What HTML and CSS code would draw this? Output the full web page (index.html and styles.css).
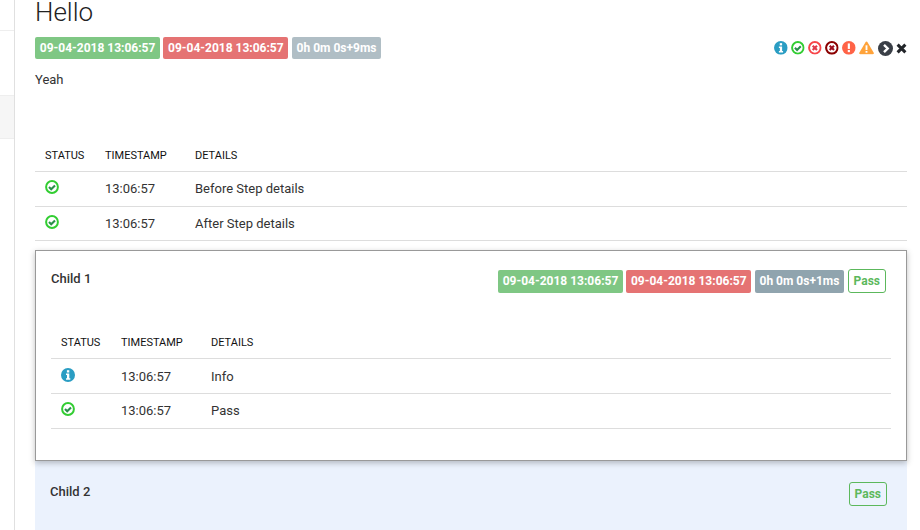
FILE: index.html
```html
<!DOCTYPE html>
<html lang="en">
<head>
<meta charset="utf-8">
<title>Hello</title>
<link rel="stylesheet" href="styles.css">
</head>
<body>
<svg class="defs" width="0" height="0" aria-hidden="true">
  <symbol id="i-info" viewBox="0 0 14 14"><circle cx="7" cy="7" r="7" fill="#2a9dc3"/><rect x="5.9" y="2.2" width="2.4" height="2.3" fill="#fff"/><path d="M5 5.6h3.3v4.6h1v1.5H5v-1.5h1V7.1H5z" fill="#fff"/></symbol>
  <symbol id="i-pass" viewBox="0 0 14 14"><circle cx="7" cy="7" r="5.9" fill="#fff" stroke="#32cd32" stroke-width="2"/><path d="M4 7l2.2 2.2L10 5.4" fill="none" stroke="#2a8f4a" stroke-width="2.1"/></symbol>
  <symbol id="i-fail" viewBox="0 0 14 14"><circle cx="7" cy="7" r="5.9" fill="#fff" stroke="#f7464a" stroke-width="2"/><path d="M4.8 4.8l4.4 4.4M9.2 4.8l-4.4 4.4" stroke="#e03a4a" stroke-width="2.2"/></symbol>
  <symbol id="i-fatal" viewBox="0 0 14 14"><circle cx="7" cy="7" r="5.9" fill="#fff" stroke="#8b0000" stroke-width="2.1"/><path d="M4.8 4.8l4.4 4.4M9.2 4.8l-4.4 4.4" stroke="#a01020" stroke-width="2.2"/></symbol>
  <symbol id="i-error" viewBox="0 0 14 14"><circle cx="7" cy="7" r="7" fill="#ff6347"/><rect x="5.9" y="2.5" width="2.2" height="5.6" fill="#fff"/><rect x="5.9" y="9.2" width="2.2" height="2.2" fill="#fff"/></symbol>
  <symbol id="i-warn" viewBox="0 0 16 14"><path d="M8 .3c.5 0 .9.3 1.1.7l6.6 11.3c.4.7-.1 1.5-.9 1.5H1.2c-.8 0-1.3-.8-.9-1.5L6.9 1c.2-.4.6-.7 1.1-.7z" fill="#ffa33a"/><rect x="7" y="4.3" width="2" height="5" fill="#fff"/><rect x="7" y="10.3" width="2" height="1.9" fill="#fff"/></symbol>
  <symbol id="i-skip" viewBox="0 0 15 15"><circle cx="7.5" cy="7.5" r="7.5" fill="#3a3f47"/><path d="M6 3.8l3.7 3.7L6 11.2" fill="none" stroke="#fff" stroke-width="2.4"/></symbol>
  <symbol id="i-x" viewBox="0 0 11 11"><path d="M1.6 1.6l7.8 7.8M9.4 1.6L1.6 9.4" stroke="#22252a" stroke-width="3"/></symbol>
</svg>
<div class="page">
  <aside class="sidebar">
    <div class="side-item"></div>
    <div class="side-item side-active"></div>
  </aside>
  <main class="main">
    <h1 class="title">Hello</h1>
    <div class="meta">
      <div class="badges">
        <span class="badge date green">09-04-2018 13:06:57</span>
        <span class="badge date red">09-04-2018 13:06:57</span>
        <span class="badge light">0h 0m 0s+9ms</span>
      </div>
      <div class="tools">
        <svg class="t14"><use href="#i-info"/></svg>
        <svg class="t14"><use href="#i-pass"/></svg>
        <svg class="t14"><use href="#i-fail"/></svg>
        <svg class="t14"><use href="#i-fatal"/></svg>
        <svg class="t14"><use href="#i-error"/></svg>
        <svg class="t16"><use href="#i-warn"/></svg>
        <svg class="t15"><use href="#i-skip"/></svg>
        <svg class="t10"><use href="#i-x"/></svg>
      </div>
    </div>
    <p class="desc">Yeah</p>
    <table class="log log-top">
      <thead><tr><th class="c1">STATUS</th><th class="c2">TIMESTAMP</th><th>DETAILS</th></tr></thead>
      <tbody>
        <tr><td><svg class="st"><use href="#i-pass"/></svg></td><td>13:06:57</td><td>Before Step details</td></tr>
        <tr><td><svg class="st"><use href="#i-pass"/></svg></td><td>13:06:57</td><td>After Step details</td></tr>
      </tbody>
    </table>
    <section class="card">
      <div class="card-head">
        <div class="card-title card-title-offset">Child 1</div>
        <div class="badges">
          <span class="badge date green">09-04-2018 13:06:57</span>
          <span class="badge date red">09-04-2018 13:06:57</span>
          <span class="badge slate">0h 0m 0s+1ms</span>
          <span class="pass">Pass</span>
        </div>
      </div>
      <table class="log log-card">
        <thead><tr><th class="c1">STATUS</th><th class="c2">TIMESTAMP</th><th>DETAILS</th></tr></thead>
        <tbody>
          <tr><td><svg class="st"><use href="#i-info"/></svg></td><td>13:06:57</td><td>Info</td></tr>
          <tr><td><svg class="st"><use href="#i-pass"/></svg></td><td>13:06:57</td><td>Pass</td></tr>
        </tbody>
      </table>
    </section>
    <section class="child2">
      <div class="card-title card-title-offset">Child 2</div>
      <span class="pass">Pass</span>
    </section>
  </main>
</div>
</body>
</html>
```
FILE: styles.css
```css
* { box-sizing: border-box; }
html, body { margin: 0; height: 530px; overflow: hidden; background: #fff; }
body { font-family: Roboto, "Liberation Sans", sans-serif; font-size: 13px; color: #333; }
.defs { position: absolute; }
.page { display: flex; height: 530px; overflow: hidden; }
.sidebar { width: 15px; flex: none; border-right: 1px solid #e0e0e0; padding-top: 30px; }
.side-item { border-top: 1px solid #eee; height: 65px; }
.side-active { background: #f6f6f6; height: 44px; border-bottom: 1px solid #eee; }
.main { flex: none; width: 872px; margin-left: 20px; }
.title { margin: 0; font-size: 26px; font-weight: 300; line-height: 24px; height: 37px; color: #222; }
.meta { display: flex; justify-content: space-between; align-items: center; height: 22px; }
.badges { display: flex; gap: 3.2px; align-items: center; }
.badge { display: block; height: 22px; line-height: 22px; padding: 0 5px; border-radius: 2px; color: #fff; font-size: 12px; font-weight: 700; white-space: nowrap; }
.date { padding: 0 4.75px; }
.card .badge { height: 23px; line-height: 23px; margin-top: 1px; }
.green { background: #7fc784; }
.red { background: #e57373; }
.light { background: #b0bec5; }
.slate { background: #90a4ae; }
.tools { display: flex; align-items: center; gap: 3.3px; }
.tools svg { display: block; }
.t14 { width: 13.7px; height: 13.7px; }
.t16 { width: 15px; height: 13.7px; }
.t15 { width: 15px; height: 15px; }
.t10 { width: 11px; height: 11px; }
.desc { margin: 0; padding-top: 13px; height: 80px; line-height: 15px; }
.log { width: 100%; border-collapse: collapse; }
.log th { height: 32px; padding: 0 10px; font-size: 11px; font-weight: 400; text-align: left; color: #111; border-bottom: 1px solid #ddd; }
.log td { height: 35px; padding: 0 10px; border-bottom: 1px solid #ddd; }
.log .c1 { width: 60px; }
.log .c2 { width: 90px; }
.st { display: block; width: 14px; height: 14px; margin-top: -3px; }
.log-top th { padding-top: 2px; }
.log-top tr + tr td { height: 34px; padding-top: 1px; }
.log-top tr + tr .st { margin-top: -4px; }
.log-card tbody tr:first-child .st { margin-top: -2px; }
.log-card tr + tr td { padding-bottom: 2px; }
.card { margin-top: 9px; height: 211px; padding: 0 15px; border: 1px solid #999; background: #fff; box-shadow: 0 2px 6px rgba(0,0,0,.25); position: relative; }
.card-head { display: flex; justify-content: space-between; align-items: flex-start; padding: 18px 5px 0 0; height: 76px; }
.card-title { font-size: 13px; font-weight: 500; color: #333; line-height: 16px; }
.card-title-offset { margin-top: 2px; }
.pass { display: block; height: 24px; line-height: 22px; padding: 0 5px; border: 1px solid #5cb85c; border-radius: 3px; color: #5cb85c; font-size: 12px; font-weight: 700; }
.child2 { display: flex; justify-content: space-between; align-items: flex-start; height: 70px; padding: 21px 20px 0 15px; background: #ebf2fd; }
```
